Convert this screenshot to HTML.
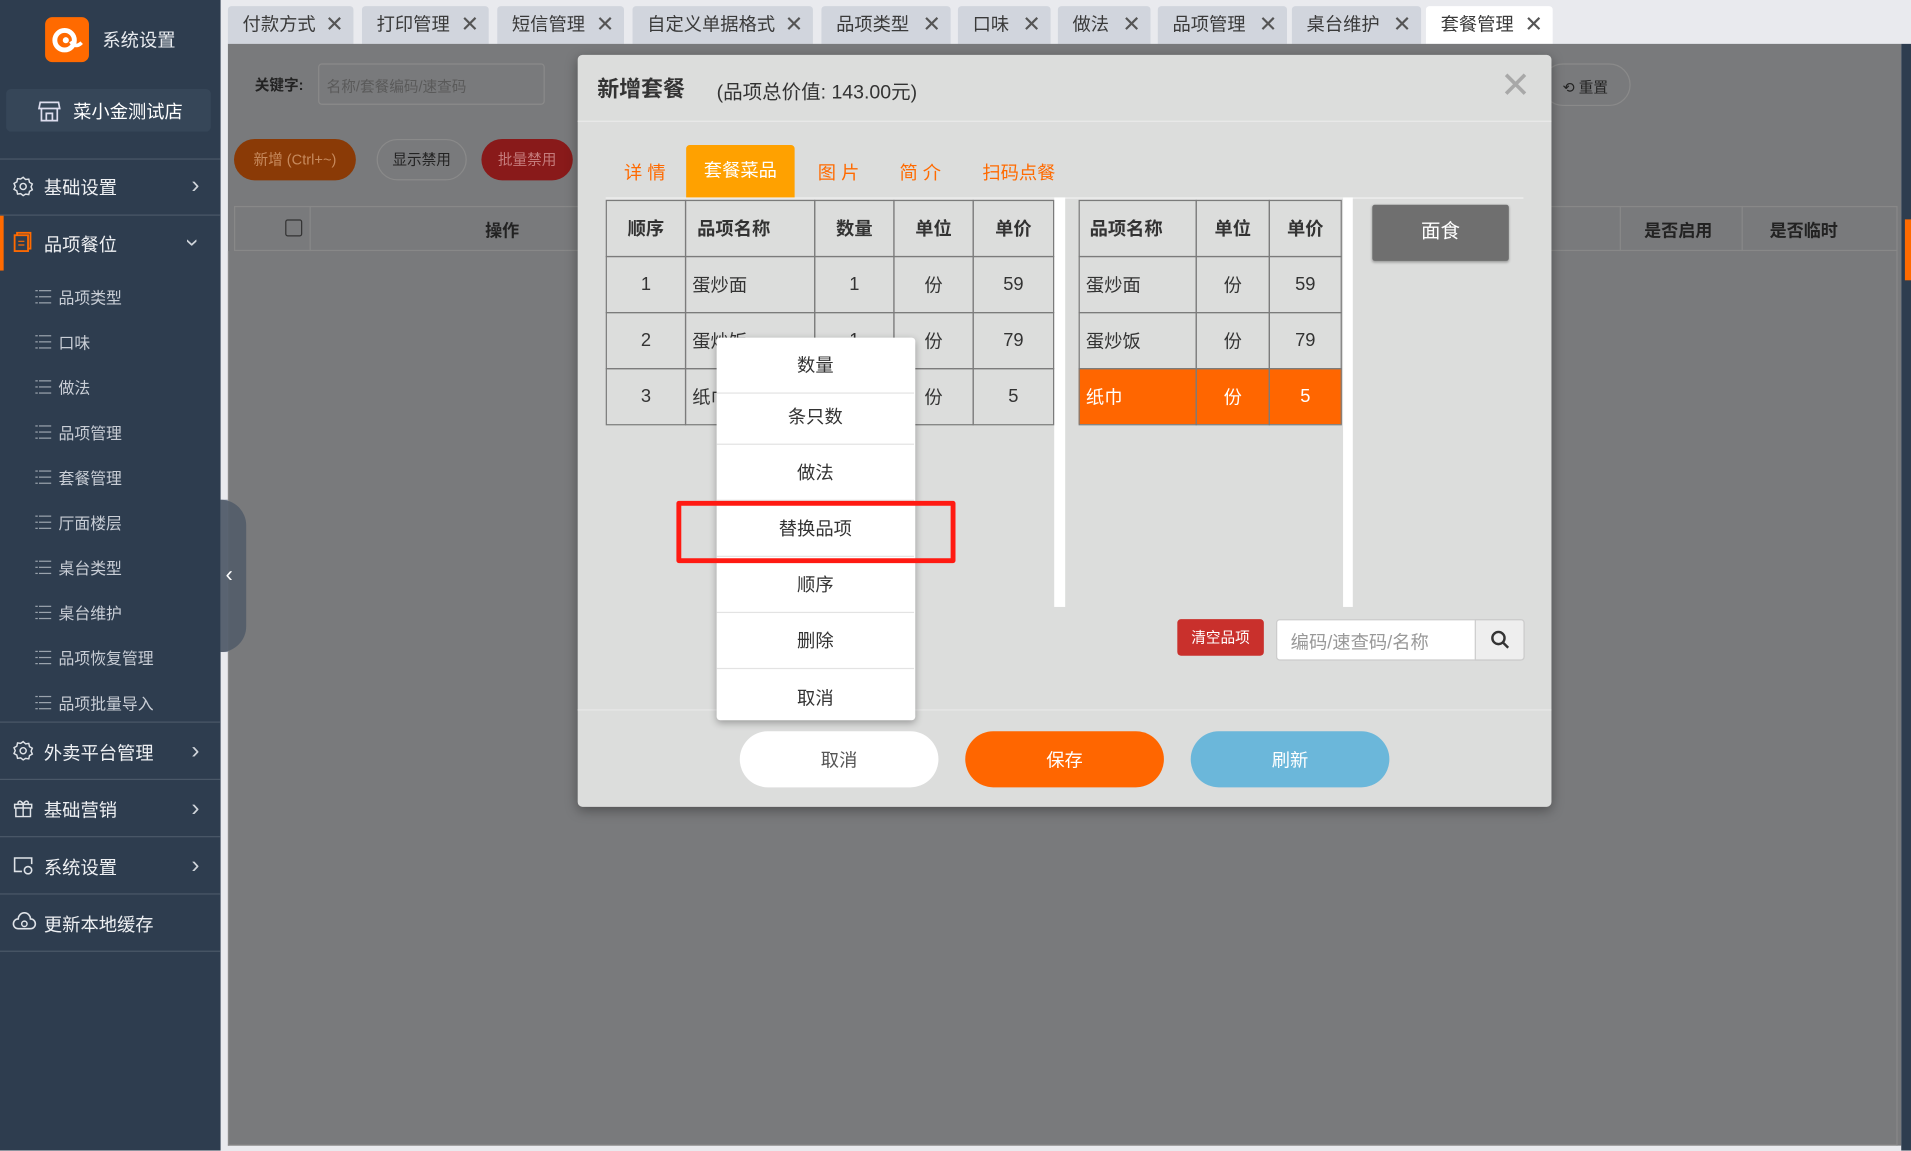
<!DOCTYPE html>
<html><head><meta charset="utf-8">
<style>
*{box-sizing:border-box;margin:0;padding:0}
html,body{width:1911px;height:1150px;overflow:hidden;background:#e9eaee;font-family:"Liberation Sans","Noto Sans CJK SC",sans-serif;}
#w{position:absolute;left:0;top:0;width:1568px;height:944px;transform:scale(1.21875);transform-origin:0 0;background:#e9eaee;}
.a{position:absolute}
.sb{left:0;top:0;width:181px;height:944px;background:#2e3d4f;color:#e6e9ee}
.sb .ln{position:absolute;left:0;width:181px;height:1px;background:#4a5868}
.mi{position:absolute;left:36px;font-size:15px;color:#eef0f3}
.chev{position:absolute;left:157px;font-size:20px;line-height:20px;color:#cfd4da}
.sub{position:absolute;left:48px;font-size:13px;color:#c9ced6}
.sub:before{content:"";position:absolute;left:-19px;top:4px;width:13px;height:11px;background:linear-gradient(#9aa3ad,#9aa3ad) 3px 0/10px 1px no-repeat,linear-gradient(#9aa3ad,#9aa3ad) 3px 5px/10px 1px no-repeat,linear-gradient(#9aa3ad,#9aa3ad) 3px 10px/10px 1px no-repeat,linear-gradient(#9aa3ad,#9aa3ad) 0 0/2px 1px no-repeat,linear-gradient(#9aa3ad,#9aa3ad) 0 5px/2px 1px no-repeat,linear-gradient(#9aa3ad,#9aa3ad) 0 10px/2px 1px no-repeat}
.tab{position:absolute;top:5px;height:31px;background:#d1d5dd;font-size:15px;color:#3a3a3a;line-height:31px;padding-left:12px;border-radius:3px 3px 0 0}
.tab i{position:absolute;right:8px;top:0;font-style:normal;font-size:18px;color:#555}
.cell{position:absolute;border:1px solid #7b7b7b;font-size:15px;color:#333;display:flex;align-items:center;justify-content:center}
.menuit{position:absolute;left:0;width:162px;height:46px;border-bottom:1px solid #e3e3e3;font-size:15px;color:#333;display:flex;align-items:center;justify-content:center}
.btn{position:absolute;top:600px;width:163px;height:46px;border-radius:23px;font-size:15px;display:flex;align-items:center;justify-content:center}
.ic{position:absolute;left:10px}
</style></head><body><div id="w">
<!-- sidebar -->
<div class="a sb">
 <div class="a" style="left:37px;top:14px;width:36px;height:37px;background:#ff6a00;border-radius:6px">
  <svg width="36" height="37" viewBox="0 0 36 37"><circle cx="16" cy="19" r="8" fill="none" stroke="#fff" stroke-width="4"/><circle cx="17" cy="19" r="2.5" fill="#fff"/><path d="M21 20 q4 6 9 1" stroke="#fff" stroke-width="3" fill="none"/></svg></div>
 <div class="a" style="left:84px;top:22px;font-size:15px;color:#e8ebef">系统设置</div>
 <div class="a" style="left:5px;top:73px;width:168px;height:35px;background:#364658;border-radius:4px"></div>
 <svg class="a" style="left:31px;top:82px" width="19" height="18" viewBox="0 0 19 18"><path d="M2 2h15l1 5H1z M3 7v10h13V7 M7 17v-6h5v6" fill="none" stroke="#dde" stroke-width="1.4"/></svg>
 <div class="a" style="left:60px;top:81px;font-size:15px;color:#fff">菜小金测试店</div>
 <div class="ln" style="top:130px"></div>
 <svg class="ic" style="top:144px" width="18" height="18" viewBox="0 0 18 18"><path d="M9 1.5l2 1.8 2.6-.3.6 2.6 2.3 1.3-1 2.4 1 2.4-2.3 1.3-.6 2.6-2.6-.3L9 16.5 7 14.9l-2.6.3-.6-2.6-2.3-1.3 1-2.4-1-2.4 2.3-1.3.6-2.6 2.6.3z" fill="none" stroke="#dfe3e8" stroke-width="1.2"/><circle cx="9" cy="9" r="2.5" fill="none" stroke="#dfe3e8" stroke-width="1.2"/></svg>
 <div class="mi" style="top:143px">基础设置</div><div class="chev" style="top:142px">›</div>
 <div class="ln" style="top:176px"></div>
 <div class="a" style="left:0;top:177px;width:3px;height:45px;background:#ff6a00"></div>
 <svg class="a" style="left:11px;top:190px" width="15" height="17" viewBox="0 0 15 17"><rect x="3" y="1" width="11" height="13" fill="none" stroke="#ff6a00" stroke-width="1.5"/><rect x="1" y="3" width="11" height="13" fill="#2e3d4f" stroke="#ff6a00" stroke-width="1.5"/><path d="M4 8h5M4 11h5" stroke="#ff6a00"/></svg>
 <div class="mi" style="top:190px">品项餐位</div><div class="chev" style="top:189px;left:155px;transform:rotate(90deg)">›</div>
 <div class="sub" style="top:234px">品项类型</div>
 <div class="sub" style="top:271px">口味</div>
 <div class="sub" style="top:308px">做法</div>
 <div class="sub" style="top:345px">品项管理</div>
 <div class="sub" style="top:382px">套餐管理</div>
 <div class="sub" style="top:419px">厅面楼层</div>
 <div class="sub" style="top:456px">桌台类型</div>
 <div class="sub" style="top:493px">桌台维护</div>
 <div class="sub" style="top:530px">品项恢复管理</div>
 <div class="sub" style="top:567px">品项批量导入</div>
 <div class="ln" style="top:592px"></div>
 <svg class="ic" style="top:607px" width="18" height="18" viewBox="0 0 18 18"><path d="M9 1.5l2 1.8 2.6-.3.6 2.6 2.3 1.3-1 2.4 1 2.4-2.3 1.3-.6 2.6-2.6-.3L9 16.5 7 14.9l-2.6.3-.6-2.6-2.3-1.3 1-2.4-1-2.4 2.3-1.3.6-2.6 2.6.3z" fill="none" stroke="#dfe3e8" stroke-width="1.2"/><circle cx="9" cy="9" r="2.5" fill="none" stroke="#dfe3e8" stroke-width="1.2"/></svg>
 <div class="mi" style="top:607px">外卖平台管理</div><div class="chev" style="top:606px">›</div>
 <div class="ln" style="top:639px"></div>
 <svg class="ic" style="top:654px" width="18" height="18" viewBox="0 0 18 18"><path d="M2 6h14v3H2z M3 9v7h12V9 M9 6v10 M9 6C7 2 4 3 5 6 M9 6c2-4 5-3 4 0" fill="none" stroke="#dfe3e8" stroke-width="1.2"/></svg>
 <div class="mi" style="top:654px">基础营销</div><div class="chev" style="top:653px">›</div>
 <div class="ln" style="top:686px"></div>
 <svg class="ic" style="top:701px" width="18" height="18" viewBox="0 0 18 18"><path d="M8 14H2V3h14v5" fill="none" stroke="#dfe3e8" stroke-width="1.3"/><circle cx="13" cy="13" r="3" fill="none" stroke="#dfe3e8" stroke-width="1.3"/></svg>
 <div class="mi" style="top:701px">系统设置</div><div class="chev" style="top:700px">›</div>
 <div class="ln" style="top:733px"></div>
 <svg class="ic" style="top:748px" width="20" height="16" viewBox="0 0 20 16"><path d="M5 14a4 4 0 0 1 0-8 5 5 0 0 1 10 0 4 4 0 0 1 0 8z" fill="none" stroke="#dfe3e8" stroke-width="1.3"/><circle cx="10" cy="10" r="2.2" fill="none" stroke="#dfe3e8" stroke-width="1.2"/></svg>
 <div class="mi" style="top:748px">更新本地缓存</div>
 <div class="ln" style="top:780px"></div>
</div>
<!-- tabs -->
<div class="tab" style="left:187px;width:103px">付款方式<i>✕</i></div>
<div class="tab" style="left:297px;width:104px">打印管理<i>✕</i></div>
<div class="tab" style="left:408px;width:104px">短信管理<i>✕</i></div>
<div class="tab" style="left:519px;width:148px">自定义单据格式<i>✕</i></div>
<div class="tab" style="left:674px;width:106px">品项类型<i>✕</i></div>
<div class="tab" style="left:786px;width:76px">口味<i>✕</i></div>
<div class="tab" style="left:868px;width:76px">做法<i>✕</i></div>
<div class="tab" style="left:950px;width:106px">品项管理<i>✕</i></div>
<div class="tab" style="left:1060px;width:106px">桌台维护<i>✕</i></div>
<div class="tab" style="left:1170px;width:104px;background:#fff">套餐管理<i>✕</i></div>
<!-- content (overlayed) -->
<div class="a" style="left:187px;top:36px;width:1373px;height:904px;background:#797a7c"></div>
<div class="a" style="left:1560px;top:36px;width:8px;height:908px;background:#2e3d4f"></div>
<div class="a" style="left:1563px;top:180px;width:5px;height:50px;background:#ff6a00"></div>
<div class="a" style="left:209px;top:61px;font-size:12px;font-weight:bold;color:#222">关键字:</div>
<div class="a" style="left:261px;top:52px;width:186px;height:34px;border:1px solid #8a8a8a;border-radius:3px;font-size:12px;color:#5a5a5a;padding:9px 6px">名称/套餐编码/速查码</div>
<div class="a" style="left:1265px;top:52px;width:73px;height:35px;border:1px solid #8a8a8a;border-radius:18px;font-size:12px;color:#222;padding:10px 0 0 16px">⟲ 重置</div>
<div class="a" style="left:192px;top:114px;width:100px;height:34px;border-radius:17px;background:#8a3a06;color:#c78a5d;font-size:12px;text-align:center;line-height:34px">新增 (Ctrl+~)</div>
<div class="a" style="left:309px;top:114px;width:74px;height:34px;border-radius:17px;border:1px solid #8a8a8a;color:#222;font-size:12px;text-align:center;line-height:32px">显示禁用</div>
<div class="a" style="left:395px;top:114px;width:75px;height:34px;border-radius:17px;background:#891a1a;color:#c57c7c;font-size:12px;text-align:center;line-height:34px">批量禁用</div>
<div class="a" style="left:192px;top:169px;width:1365px;height:37px;border:1px solid #888"></div>
<div class="a" style="left:234px;top:180px;width:14px;height:14px;border:1.5px solid #333;border-radius:2px"></div>
<div class="a" style="left:254px;top:169px;width:1px;height:37px;background:#888"></div>
<div class="a" style="left:1329px;top:169px;width:1px;height:37px;background:#888"></div>
<div class="a" style="left:1429px;top:169px;width:1px;height:37px;background:#888"></div>
<div class="a" style="left:398px;top:179px;font-size:14px;font-weight:bold;color:#222">操作</div>
<div class="a" style="left:1349px;top:179px;font-size:14px;font-weight:bold;color:#222">是否启用</div>
<div class="a" style="left:1452px;top:179px;font-size:14px;font-weight:bold;color:#222">是否临时</div>
<div class="a" style="left:187px;top:206px;width:1370px;height:734px;border-left:1px solid #888;border-right:1px solid #888;border-bottom:1px solid #888"></div>
<!-- collapse handle -->
<div class="a" style="left:181px;top:410px;width:6px;height:125px;background:#8a93a3"></div>
<div class="a" style="left:181px;top:410px;width:21px;height:125px;background:rgba(80,90,105,.85);border-radius:0 22px 22px 0"></div>
<div class="a" style="left:185px;top:461px;color:#fff;font-size:18px">‹</div>
<!-- modal -->
<div class="a" style="left:474px;top:45px;width:799px;height:617px;background:#dcdddc;border-radius:4px;box-shadow:0 3px 10px rgba(0,0,0,.35)">
 <div class="a" style="left:16px;top:14px;font-size:18px;font-weight:bold;color:#333">新增套餐</div>
 <div class="a" style="left:114px;top:17px;font-size:16px;color:#333">(品项总价值: 143.00元)</div>
 <div class="a" style="left:757px;top:8px;font-size:30px;color:#a8a8a8;font-weight:200">✕</div>
 <div class="a" style="left:0;top:54px;width:799px;height:1px;background:#eaeaea"></div>
</div>
<div class="a" style="left:512px;top:131px;font-size:15px;color:#ff6a00">详 情</div>
<div class="a" style="left:563px;top:119px;width:89px;height:43px;background:#ffa100;border-radius:3px 3px 0 0;color:#fff;font-size:15px;text-align:center;line-height:43px">套餐菜品</div>
<div class="a" style="left:671px;top:131px;font-size:15px;color:#ff6a00">图 片</div>
<div class="a" style="left:738px;top:131px;font-size:15px;color:#ff6a00">简 介</div>
<div class="a" style="left:806px;top:131px;font-size:15px;color:#ff6a00">扫码点餐</div>
<div class="a" style="left:497px;top:162px;width:753px;height:1px;background:#f2f2f2"></div>
<div class="a" style="left:865px;top:162px;width:9px;height:336px;background:#fff"></div>
<div class="a" style="left:1102px;top:162px;width:8px;height:336px;background:#fff"></div>
<div class="a" style="left:1126px;top:168px;width:112px;height:46px;background:#6f6f6f;border-radius:2px;color:#fff;font-size:16px;text-align:center;line-height:46px;box-shadow:0 1px 2px rgba(0,0,0,.3)">面食</div>
<div class="a" style="left:885px;top:302px;width:216px;height:46px;background:#ff6600"></div>
<!-- table cells -->
<div class="cell" style="left:497px;top:164px;width:66px;height:47px;font-weight:bold">顺序</div>
<div class="cell" style="left:562px;top:164px;width:107px;height:47px;font-weight:bold;justify-content:flex-start;padding-left:9px">品项名称</div>
<div class="cell" style="left:668px;top:164px;width:66px;height:47px;font-weight:bold">数量</div>
<div class="cell" style="left:733px;top:164px;width:66px;height:47px;font-weight:bold">单位</div>
<div class="cell" style="left:798px;top:164px;width:67px;height:47px;font-weight:bold">单价</div>
<div class="cell" style="left:497px;top:210px;width:66px;height:47px">1</div>
<div class="cell" style="left:562px;top:210px;width:107px;height:47px;justify-content:flex-start;padding-left:5px">蛋炒面</div>
<div class="cell" style="left:668px;top:210px;width:66px;height:47px">1</div>
<div class="cell" style="left:733px;top:210px;width:66px;height:47px">份</div>
<div class="cell" style="left:798px;top:210px;width:67px;height:47px">59</div>
<div class="cell" style="left:497px;top:256px;width:66px;height:47px">2</div>
<div class="cell" style="left:562px;top:256px;width:107px;height:47px;justify-content:flex-start;padding-left:5px">蛋炒饭</div>
<div class="cell" style="left:668px;top:256px;width:66px;height:47px">1</div>
<div class="cell" style="left:733px;top:256px;width:66px;height:47px">份</div>
<div class="cell" style="left:798px;top:256px;width:67px;height:47px">79</div>
<div class="cell" style="left:497px;top:302px;width:66px;height:47px">3</div>
<div class="cell" style="left:562px;top:302px;width:107px;height:47px;justify-content:flex-start;padding-left:5px">纸巾</div>
<div class="cell" style="left:668px;top:302px;width:66px;height:47px">1</div>
<div class="cell" style="left:733px;top:302px;width:66px;height:47px">份</div>
<div class="cell" style="left:798px;top:302px;width:67px;height:47px">5</div>
<div class="cell" style="left:885px;top:164px;width:97px;height:47px;font-weight:bold;justify-content:flex-start;padding-left:8px">品项名称</div>
<div class="cell" style="left:981px;top:164px;width:61px;height:47px;font-weight:bold">单位</div>
<div class="cell" style="left:1041px;top:164px;width:60px;height:47px;font-weight:bold">单价</div>
<div class="cell" style="left:885px;top:210px;width:97px;height:47px;justify-content:flex-start;padding-left:5px">蛋炒面</div>
<div class="cell" style="left:981px;top:210px;width:61px;height:47px">份</div>
<div class="cell" style="left:1041px;top:210px;width:60px;height:47px">59</div>
<div class="cell" style="left:885px;top:256px;width:97px;height:47px;justify-content:flex-start;padding-left:5px">蛋炒饭</div>
<div class="cell" style="left:981px;top:256px;width:61px;height:47px">份</div>
<div class="cell" style="left:1041px;top:256px;width:60px;height:47px">79</div>
<div class="cell" style="left:885px;top:302px;width:97px;height:47px;justify-content:flex-start;padding-left:5px;color:#fff">纸巾</div>
<div class="cell" style="left:981px;top:302px;width:61px;height:47px;color:#fff">份</div>
<div class="cell" style="left:1041px;top:302px;width:60px;height:47px;color:#fff">5</div>
<!-- clear / search -->
<div class="a" style="left:966px;top:508px;width:71px;height:30px;background:#c9302c;border-radius:3px;color:#fff;font-size:12px;text-align:center;line-height:30px">清空品项</div>
<div class="a" style="left:1047px;top:508px;width:204px;height:34px;background:#fff;border:1px solid #ccc;border-radius:3px"></div>
<div class="a" style="left:1059px;top:516px;font-size:15px;color:#999">编码/速查码/名称</div>
<div class="a" style="left:1210px;top:508px;width:41px;height:34px;background:#eee;border:1px solid #ccc;border-radius:0 3px 3px 0"></div>
<svg class="a" style="left:1223px;top:517px" width="16" height="16" viewBox="0 0 16 16"><circle cx="6.5" cy="6.5" r="5" fill="none" stroke="#333" stroke-width="2"/><path d="M10 10l4.5 4.5" stroke="#333" stroke-width="2"/></svg>
<div class="a" style="left:474px;top:582px;width:799px;height:1px;background:#e8e8e8"></div>
<div class="btn" style="left:607px;background:#fff;color:#555">取消</div>
<div class="btn" style="left:792px;background:#ff6600;color:#fff">保存</div>
<div class="btn" style="left:977px;background:#6bb7da;color:#fff">刷新</div>
<!-- context menu -->
<div class="a" style="left:588px;top:277px;width:163px;height:314px;background:#fff;border-radius:3px;box-shadow:0 2px 6px rgba(0,0,0,.3);overflow:hidden">
 <div class="menuit" style="top:0">数量</div>
 <div class="menuit" style="top:42px">条只数</div>
 <div class="menuit" style="top:88px">做法</div>
 <div class="menuit" style="top:134px">替换品项</div>
 <div class="menuit" style="top:180px">顺序</div>
 <div class="menuit" style="top:226px">删除</div>
 <div class="menuit" style="top:272px;border:0">取消</div>
</div>
<div class="a" style="left:555px;top:411px;width:229px;height:51px;border:4px solid #ff1a12;border-radius:2px"></div>
</div></body></html>
